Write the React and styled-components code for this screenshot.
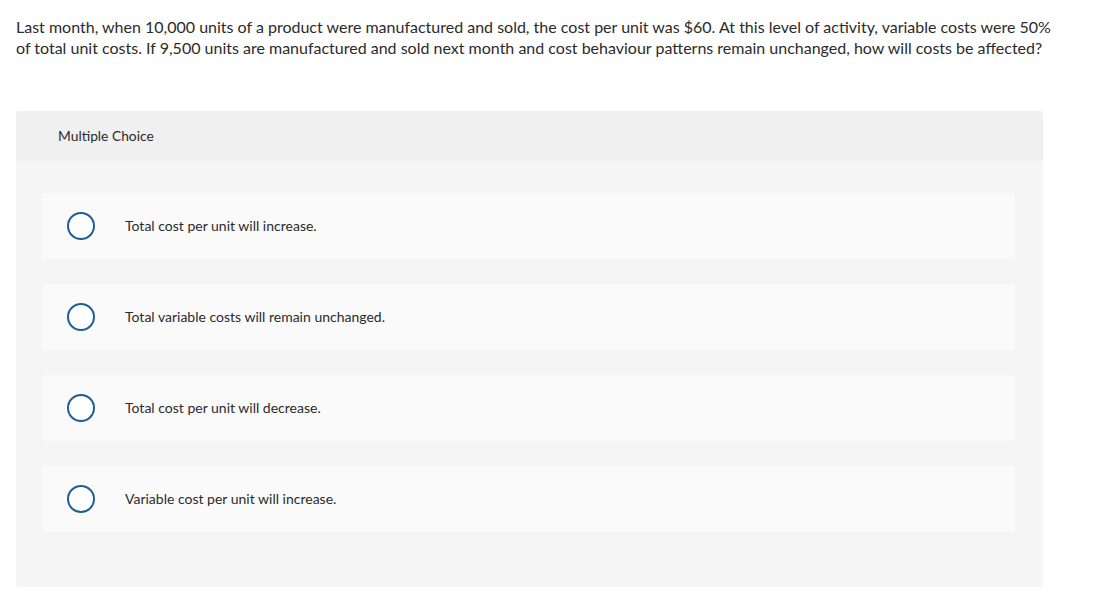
import React from "react";
import styled, { createGlobalStyle } from "styled-components";

const Global = createGlobalStyle`
  html, body { margin: 0; padding: 0; background: #fff; }
  body { font-family: "Lato", "Open Sans", sans-serif; color: #2b2b2b; }
`;

const Page = styled.div`
  padding: 17px 40px 0 16px;
`;

const Question = styled.p`
  margin: 0;
  font-size: 16px;
  line-height: 20.5px;
  color: #2b2b2b;
`;

const Panel = styled.section`
  margin-top: 52.5px;
  width: 1027px;
  border-radius: 3px;
  background: #f5f5f5;
  overflow: hidden;
`;

const Header = styled.div`
  box-sizing: border-box;
  height: 50px;
  display: flex;
  align-items: center;
  padding: 0 0 1px 42px;
  background: #f0f0f0;
  font-size: 13.8px;
  color: #2b2b2b;
`;

const Options = styled.div`
  display: flex;
  flex-direction: column;
  gap: 25px;
  padding: 32px 28px 55px 26px;
`;

const Option = styled.label`
  box-sizing: border-box;
  height: 66px;
  display: flex;
  align-items: center;
  background: #fafafa;
  border-radius: 3px;
  cursor: pointer;
`;

const Radio = styled.span`
  box-sizing: border-box;
  width: 28px;
  height: 28px;
  margin-left: 25px;
  border: 2px solid #1f5d96;
  border-radius: 50%;
  background: #fff;
  flex: none;
`;

const OptionText = styled.span`
  margin: 0 0 1px 30px;
  font-size: 14px;
  color: #2b2b2b;
`;

const options = [
  "Total cost per unit will increase.",
  "Total variable costs will remain unchanged.",
  "Total cost per unit will decrease.",
  "Variable cost per unit will increase.",
];

export default function App() {
  return (
    <>
      <Global />
      <Page>
        <Question>
          Last month, when 10,000 units of a product were manufactured and sold, the cost per unit was $60. At this level of activity, variable costs were 50% of total unit costs. If 9,500 units are manufactured and sold next month and cost behaviour patterns remain unchanged, how will costs be affected?
        </Question>
        <Panel>
          <Header>Multiple Choice</Header>
          <Options>
            {options.map((o) => (
              <Option key={o}>
                <Radio />
                <OptionText>{o}</OptionText>
              </Option>
            ))}
          </Options>
        </Panel>
      </Page>
    </>
  );
}
